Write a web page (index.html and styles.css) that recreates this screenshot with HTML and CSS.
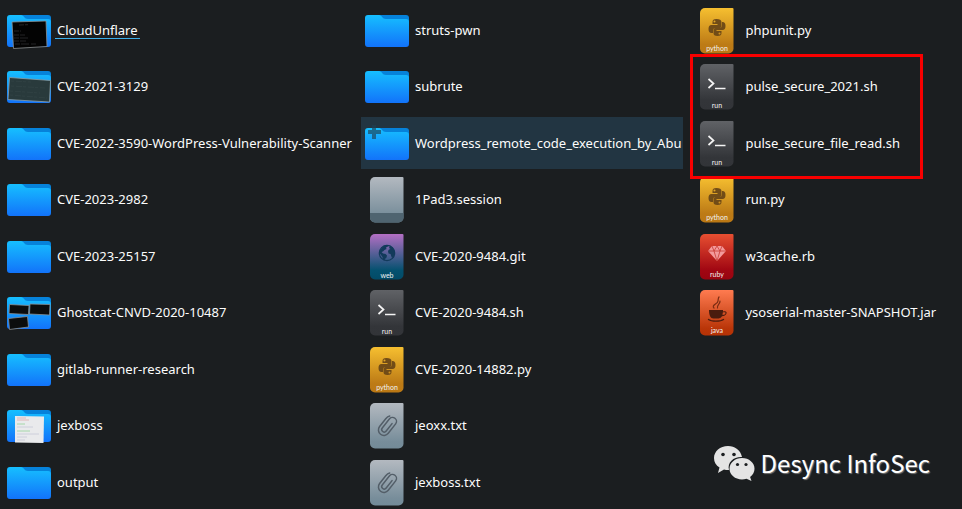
FILE: index.html
```html
<!DOCTYPE html>
<html lang="en">

<head>
    <meta charset="UTF-8">
    <meta name="viewport" content="width=device-width, initial-scale=1.0">
    <title>Files</title>
    <link rel="stylesheet" href="styles.css">
</head>

<body>
    <!-- icons -->
    <svg class="sprite" aria-hidden="true">
        <defs>
            <linearGradient id="g-folder" x1="0" y1="0" x2="0" y2="1">
                <stop offset="0" stop-color="#16bfff" />
                <stop offset="1" stop-color="#1273fa" />
            </linearGradient>
            <linearGradient id="g-gray" x1="0" y1="0" x2="0" y2="1">
                <stop offset="0" stop-color="#b3b9c0" />
                <stop offset="0.85" stop-color="#778d9a" />
                <stop offset="1" stop-color="#738b98" />
            </linearGradient>
            <linearGradient id="g-web" x1="0" y1="0" x2="0" y2="1">
                <stop offset="0" stop-color="#b46fc4" />
                <stop offset="0.8" stop-color="#04516f" />
                <stop offset="1" stop-color="#024b67" />
            </linearGradient>
            <linearGradient id="g-run" x1="0" y1="0" x2="0" y2="1">
                <stop offset="0" stop-color="#606266" />
                <stop offset="0.8" stop-color="#333539" />
                <stop offset="1" stop-color="#323438" />
            </linearGradient>
            <linearGradient id="g-python" x1="0" y1="0" x2="0" y2="1">
                <stop offset="0" stop-color="#f6bf30" />
                <stop offset="0.8" stop-color="#bd7b16" />
                <stop offset="1" stop-color="#bb7814" />
            </linearGradient>
            <linearGradient id="g-ruby" x1="0" y1="0" x2="0" y2="1">
                <stop offset="0" stop-color="#e74f31" />
                <stop offset="0.8" stop-color="#a00612" />
                <stop offset="1" stop-color="#980410" />
            </linearGradient>
            <linearGradient id="g-java" x1="0" y1="0" x2="0" y2="1">
                <stop offset="0" stop-color="#ff7b50" />
                <stop offset="0.85" stop-color="#b93508" />
                <stop offset="1" stop-color="#b43206" />
            </linearGradient>
        </defs>

        <symbol id="folder" viewBox="0 0 48 48">
            <path fill="#0682da" d="M5 9h38a3 3 0 0 1 3 3v12H10z" />
            <path fill="url(#g-folder)" d="M5 9h11c3 0 3 4 7 4h20a3 3 0 0 1 3 3v22a3 3 0 0 1-3 3H5a3 3 0 0 1-3-3V12a3 3 0 0 1 3-3z" />
        </symbol>

        <symbol id="sheet" viewBox="0 0 48 48">
            <path d="M12 2h27.500a1 1 0 0 1 1 1v39.500a5 5 0 0 1-5 5H12a5 5 0 0 1-5-5V7a5 5 0 0 1 5-5z" />
        </symbol>

        <symbol id="session" viewBox="0 0 48 48">
            <use href="#sheet" fill="url(#g-gray)" />
            <path fill="#4f6470" d="M7 38h33.500v4.500a5 5 0 0 1-5 5H12a5 5 0 0 1-5-5z" />
        </symbol>

        <symbol id="web" viewBox="0 0 48 48">
            <use href="#sheet" fill="url(#g-web)" />
            <circle cx="24" cy="21" r="7.700" fill="none" stroke="#123a5b" stroke-width="1.200" />
            <path fill="#123a5b" d="M17 18.500l2-3 3-2 2.500-.3.5 1.300-2 1 .5 1.500-2 1-1.500 1.500-1.500.5 1.500 1.500 2.500.5 1.500 1.500-.5 2-1.500 1.500-.5 1.500-1.500-.5-.5-3-1.500-2-1.500-2zM26 16l1-2 3 2 1.500 3 .3 3-1.300 3-1.500 1-1-2.500-.5-1.500-2-.5-.5-2.500 1-1.500 1.500-.5z" />
        </symbol>

        <symbol id="run" viewBox="0 0 48 48">
            <use href="#sheet" fill="url(#g-run)" />
            <path fill="none" stroke="#f4f4f4" stroke-width="1.700" d="M15.500 17l5 4.500-5 4.500M22 26.500h10.500" />
        </symbol>

        <symbol id="python" viewBox="0 0 48 48">
            <use href="#sheet" fill="url(#g-python)" />
            <g fill="#714c17">
                <path d="M23.500 13c-3 0-4 1-4 3v2h5v1h-6c-2 0-3 1.500-3 4s1 4 3 4h1.500v-2.500c0-1.500 1-2.500 2.500-2.500h4c1.500 0 2-1 2-2v-4c0-2-2-3-5-3zm-2 1.500a1 1 0 1 1 0 2 1 1 0 0 1 0-2z" />
                <path d="M24.500 30c3 0 4-1 4-3v-2h-5v-1h6c2 0 3-1.500 3-4s-1-4-3-4h-.5v3c0 2-1 3-2.500 3h-4c-1.500 0-2 1-2 2v3c0 2 1 3 4 3zm2-1.500a1 1 0 1 1 0-2 1 1 0 0 1 0 2z" />
            </g>
        </symbol>

        <symbol id="clip" viewBox="0 0 48 48">
            <use href="#sheet" fill="url(#g-gray)" />
            <path fill="none" stroke="#535e68" stroke-width="1.500" stroke-linecap="round" transform="rotate(38 24 25)" d="M18.500 20v10a5.500 5.500 0 0 0 11 0V18a4 4 0 0 0-8 0v11.500a2.500 2.500 0 0 0 5 0V20M18.500 20c0-2 .5-3.500 1.500-4.500" />
        </symbol>

        <symbol id="ruby" viewBox="0 0 48 48">
            <use href="#sheet" fill="url(#g-ruby)" />
            <path fill="#f39a9b" d="M19 14h10l4 5-9 10-9-10z" />
            <path fill="none" stroke="#c83a34" stroke-width=".8" d="M15 19h18M19 14l2 5 3 10 3-10 2-5M21 19l3-5 3 5" />
        </symbol>

        <symbol id="java" viewBox="0 0 48 48">
            <use href="#sheet" fill="url(#g-java)" />
            <path fill="#4a1c0e" d="M16 22h14v1.500c3-.8 4 .2 3.500 2-.5 1.500-2.500 2.800-4.500 2.800-1 1.700-2.500 2.200-3.500 2.200h-5c-3 0-4.500-3-4.500-8.500zm13.800 2.500l-.3 2.500c2 0 3-.8 3-2 0-.7-1.200-.8-2.700-.5z" />
            <path fill="none" stroke="#4a1c0e" stroke-width="1.400" stroke-linecap="round" d="M15.500 31.500c3 2.200 12 2.200 15 0" />
            <path fill="none" stroke="#7a2c12" stroke-width="1.200" stroke-linecap="round" d="M21 20c-3-3 4-4 4-7 .3-1.500 0-3 1-4M24.500 20c-1-3 3-4 2.500-7" />
        </symbol>
    </svg>

    <main class="files">
        <ul class="column column-first">
            <li class="item hovered">
                <svg class="icon" viewBox="0 0 48 48">
                    <use href="#folder" />
                    <path fill="#030303" stroke="#8d9092" stroke-width=".8" d="M7 16l34-1 1 25.500-33.500 2z" />
                    <path stroke="#2e2f30" stroke-width=".8" stroke-dasharray="5 1 8 2" d="M14 19l9-.3M9 25h7M9 29h11M9 32h14M9 35h12M10 38h22" />
                </svg>
                <span class="name">CloudUnflare</span>
            </li>
            <li class="item">
                <svg class="icon" viewBox="0 0 48 48">
                    <use href="#folder" />
                    <path fill="#293a3c" stroke="#8fa0a4" stroke-width=".8" d="M4.500 15.500l41 3L44.500 40 3 37.500z" />
                    <path fill="none" stroke="#304143" stroke-width="1" stroke-dasharray="3 2 6 1" d="M6 19l20 1M6 24l34 2M5 29l30 2M5 33l37 3" />
                </svg>
                <span class="name">CVE-2021-3129</span>
            </li>
            <li class="item">
                <svg class="icon"><use href="#folder" /></svg>
                <span class="name">CVE-2022-3590-WordPress-Vulnerability-Scanner</span>
            </li>
            <li class="item">
                <svg class="icon"><use href="#folder" /></svg>
                <span class="name">CVE-2023-2982</span>
            </li>
            <li class="item">
                <svg class="icon"><use href="#folder" /></svg>
                <span class="name">CVE-2023-25157</span>
            </li>
            <li class="item">
                <svg class="icon" viewBox="0 0 48 48">
                    <use href="#folder" />
                    <g fill="#0b0d0e" stroke="#8b9193" stroke-width=".8">
                        <path d="M4.500 16.500l19.500 1-.5 9-19.500-1z" />
                        <path d="M25 16l20 .5-.5 10.500-20-1z" />
                        <path d="M3.500 30.500l19-2 1 10.500-19 2.500z" />
                    </g>
                </svg>
                <span class="name">Ghostcat-CNVD-2020-10487</span>
            </li>
            <li class="item">
                <svg class="icon"><use href="#folder" /></svg>
                <span class="name">gitlab-runner-research</span>
            </li>
            <li class="item">
                <svg class="icon" viewBox="0 0 48 48">
                    <use href="#folder" />
                    <path fill="#e9eaec" d="M10 15l29 .5-.5 26.500-28.500-.5z" />
                    <g fill="none" stroke-width=".8">
                        <path stroke="#dda9ad" d="M12 17h9M12 19h12" />
                        <path stroke="#93d39a" d="M12 23h8M12 30h13" />
                        <path stroke="#c5c9d8" d="M12 26h16M12 33h22M12 36h10M12 39h8" />
                    </g>
                </svg>
                <span class="name">jexboss</span>
            </li>
            <li class="item">
                <svg class="icon"><use href="#folder" /></svg>
                <span class="name">output</span>
            </li>
        </ul>

        <ul class="column">
            <li class="item">
                <svg class="icon"><use href="#folder" /></svg>
                <span class="name">struts-pwn</span>
            </li>
            <li class="item">
                <svg class="icon"><use href="#folder" /></svg>
                <span class="name">subrute</span>
            </li>
            <li class="item selected">
                <svg class="icon" viewBox="0 0 48 48">
                    <use href="#folder" />
                    <path fill="#1f4053" fill-opacity=".65" d="M9 6h4v5h5v4h-5v5H9v-5H5v-4h4z" />
                </svg>
                <span class="name">Wordpress_remote_code_execution_by_Abu</span>
            </li>
            <li class="item">
                <svg class="icon"><use href="#session" /></svg>
                <span class="name">1Pad3.session</span>
            </li>
            <li class="item">
                <svg class="icon"><use href="#web" /><text class="kind" x="24" y="46">web</text></svg>
                <span class="name">CVE-2020-9484.git</span>
            </li>
            <li class="item">
                <svg class="icon"><use href="#run" /><text class="kind" x="24" y="46">run</text></svg>
                <span class="name">CVE-2020-9484.sh</span>
            </li>
            <li class="item">
                <svg class="icon"><use href="#python" /><text class="kind" x="24" y="45">python</text></svg>
                <span class="name">CVE-2020-14882.py</span>
            </li>
            <li class="item">
                <svg class="icon"><use href="#clip" /></svg>
                <span class="name">jeoxx.txt</span>
            </li>
            <li class="item">
                <svg class="icon"><use href="#clip" /></svg>
                <span class="name">jexboss.txt</span>
            </li>
        </ul>

        <ul class="column">
            <li class="item">
                <svg class="icon"><use href="#python" /><text class="kind" x="24" y="45">python</text></svg>
                <span class="name">phpunit.py</span>
            </li>
            <li class="item">
                <svg class="icon"><use href="#run" /><text class="kind" x="24" y="46">run</text></svg>
                <span class="name">pulse_secure_2021.sh</span>
            </li>
            <li class="item">
                <svg class="icon"><use href="#run" /><text class="kind" x="24" y="46">run</text></svg>
                <span class="name">pulse_secure_file_read.sh</span>
            </li>
            <li class="item">
                <svg class="icon"><use href="#python" /><text class="kind" x="24" y="45">python</text></svg>
                <span class="name">run.py</span>
            </li>
            <li class="item">
                <svg class="icon"><use href="#ruby" /><text class="kind" x="24" y="45">ruby</text></svg>
                <span class="name">w3cache.rb</span>
            </li>
            <li class="item">
                <svg class="icon"><use href="#java" /><text class="kind" x="24" y="45">java</text></svg>
                <span class="name">ysoserial-master-SNAPSHOT.jar</span>
            </li>
            <li class="mark" aria-hidden="true"></li>
        </ul>

        <div class="watermark">
            <svg class="wechat" viewBox="0 0 42 36">
                <path fill="#e4e4e4" d="M15 1C7 1 1 6.500 1 13c0 4 2 7.500 5.500 9.500L5 28l6-3.500c1.500.4 3.500.6 5 .5-2-8 5-13.500 13-13C27.500 5 22 1 15 1z" />
                <path fill="#e4e4e4" d="M29 13c-7 0-12.500 4.800-12.500 10.800S22 34.500 29 34.500c1.500 0 3-.3 4.500-.7l5 2.200-1.400-4C40 30 41.500 27 41.500 23.800 41.500 17.800 36 13 29 13z" />
                <g fill="#1b1e20">
                    <circle cx="10" cy="9.500" r="1.800" />
                    <circle cx="21" cy="9.500" r="1.800" />
                    <circle cx="24.500" cy="19.500" r="1.600" />
                    <circle cx="33" cy="19.500" r="1.600" />
                </g>
            </svg>
            <span>Desync InfoSec</span>
        </div>
    </main>
</body>

</html>
```

FILE: styles.css
```css
* {
    margin: 0;
    padding: 0;
    box-sizing: border-box;
    list-style: none;
}

body {
    background-color: #1b1e20;
    color: #fcfcfc;
    font-family: "Noto Sans", sans-serif;
    font-size: 13px;
    line-height: 18px;
}

.sprite {
    position: absolute;
    width: 0;
    height: 0;
}

.files {
    position: relative;
    display: flex;
    gap: 8px;
    min-height: 100vh;
    padding: 4px 3px 0;
}

.column {
    position: relative;
    display: grid;
    grid-auto-rows: 52px 53px;
    row-gap: 4px;
    align-content: start;
}

.column-first {
    flex: none;
    width: 350px;
}

.item {
    display: flex;
    align-items: center;
    gap: 4px;
    height: 52px;
    padding: 0 2px;
    white-space: nowrap;
}

.item.selected {
    background-color: #223542;
}

.icon {
    flex: none;
    width: 48px;
    height: 48px;
}

.kind {
    fill: #f2f2f2;
    font-family: Lato, sans-serif;
    font-size: 7px;
    text-anchor: middle;
}

.item.hovered .name {
    margin-left: -2px;
    padding: 0 2px;
    box-shadow: inset 0 -1px #3daee9;
}

/* red frame round the pulse_secure scripts */
.mark {
    position: absolute;
    top: 50px;
    left: -1px;
    width: 233px;
    height: 125px;
    border: 3px solid #f80000;
}

.watermark {
    position: absolute;
    right: 32px;
    bottom: 28px;
    display: flex;
    align-items: center;
    gap: 6px;
    color: #fff;
    font-family: "Noto Sans CJK SC", sans-serif;
    font-size: 24px;
    line-height: 34px;
    text-shadow: 1px 1px 1px #777;
}

.wechat {
    width: 42px;
    height: 36px;
}
```
